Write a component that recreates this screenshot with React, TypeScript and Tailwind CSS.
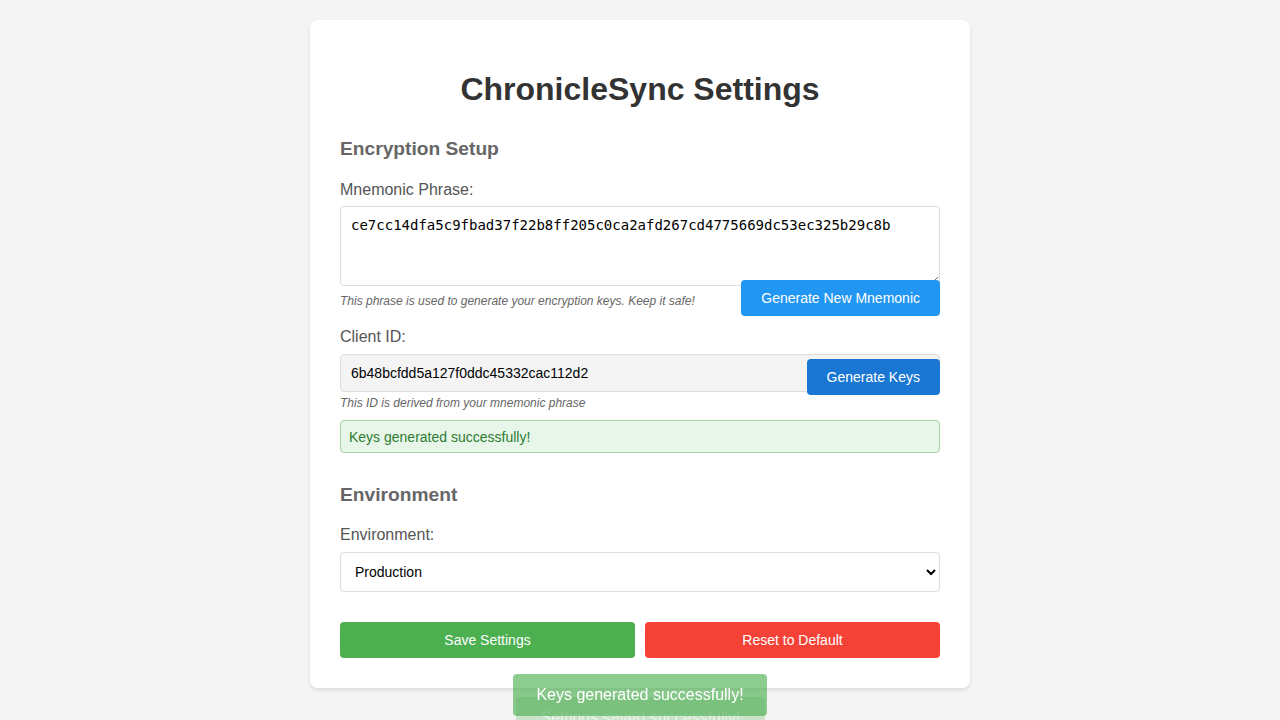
import React from "react";

export default function App() {
  return (
    <div
      className="min-h-[720px] w-full bg-[#f4f4f4] pt-[20px] pb-[32px]"
      style={{ fontFamily: '"Liberation Sans", Arial, sans-serif' }}
    >
      <div className="mx-auto w-[660px] rounded-[8px] bg-white p-[30px] shadow-[0_2px_4px_rgba(0,0,0,0.1)]">
        <h1 className="mt-[21px] text-center text-[32px] font-bold leading-[37px] text-[#333]">
          ChronicleSync Settings
        </h1>

        <h2 className="mt-[30px] text-[19.2px] font-bold leading-[22px] text-[#666]">
          Encryption Setup
        </h2>

        <label className="mt-[21px] block text-[16px] leading-[18px] text-[#555]">
          Mnemonic Phrase:
        </label>
        <textarea
          readOnly
          className="mt-[7px] block h-[80px] w-full rounded-[4px] border border-[#ddd] bg-white p-[10px] text-[14px] leading-[17px] text-black outline-none"
          style={{ fontFamily: '"DejaVu Sans Mono", monospace' }}
          value="ce7cc14dfa5c9fbad37f22b8ff205c0ca2afd267cd4775669dc53ec325b29c8b"
        />
        <div className="relative mt-[-6px] flex h-[36px] items-center justify-between">
          <p className="mt-[6px] text-[12px] italic leading-[14px] text-[#666]">
            This phrase is used to generate your encryption keys. Keep it safe!
          </p>
          <button className="h-[36px] rounded-[4px] bg-[#2196F3] px-[20px] text-[14px] text-white">
            Generate New Mnemonic
          </button>
        </div>

        <label className="mt-[12px] block text-[16px] leading-[18px] text-[#555]">
          Client ID:
        </label>
        <div className="relative mt-[8px]">
          <input
            readOnly
            className="block h-[38px] w-full rounded-[4px] border border-[#ddd] bg-[#f4f4f4] px-[10px] text-[14px] text-black outline-none"
            value="6b48bcfdd5a127f0ddc45332cac112d2"
          />
          <button className="absolute right-0 top-[5px] h-[36px] rounded-[4px] bg-[#1976D2] px-[20px] text-[14px] text-white">
            Generate Keys
          </button>
        </div>
        <p className="mt-[4px] text-[12px] italic leading-[14px] text-[#666]">
          This ID is derived from your mnemonic phrase
        </p>
        <div className="mt-[10px] rounded-[4px] border border-[#a5d6a7] bg-[#e8f5e9] px-[8px] pt-[8px] pb-[7px] text-[14px] leading-[16px] text-[#2e7d32]">
          Keys generated successfully!
        </div>

        <h2 className="mt-[31px] text-[19.2px] font-bold leading-[22px] text-[#666]">
          Environment
        </h2>
        <label className="mt-[20px] block text-[16px] leading-[18px] text-[#555]">
          Environment:
        </label>
        <select
          className="mt-[8px] block h-[40px] w-full rounded-[4px] border border-[#ddd] bg-white px-[10px] text-[14px] text-black outline-none"
          defaultValue="production"
        >
          <option value="production">Production</option>
          <option value="staging">Staging</option>
          <option value="development">Development</option>
        </select>

        <div className="mt-[30px] flex gap-[10px]">
          <button className="h-[36px] flex-1 rounded-[4px] bg-[#4CAF50] text-[14px] text-white">
            Save Settings
          </button>
          <button className="h-[36px] flex-1 rounded-[4px] bg-[#F44336] text-[14px] text-white">
            Reset to Default
          </button>
        </div>
      </div>

      <div className="fixed left-[516px] top-[697px] z-10 w-[249px] rounded-[4px] bg-[rgba(76,175,80,0.25)] py-[12px] text-center text-[16px] leading-[18px] text-[rgba(255,255,255,0.6)]">
        Settings saved successfully!
      </div>
      <div className="fixed left-[513px] top-[674px] z-20 w-[254px] rounded-[4px] bg-[rgba(76,175,80,0.64)] py-[12px] text-center text-[16px] leading-[18px] text-white">
        Keys generated successfully!
      </div>
    </div>
  );
}
